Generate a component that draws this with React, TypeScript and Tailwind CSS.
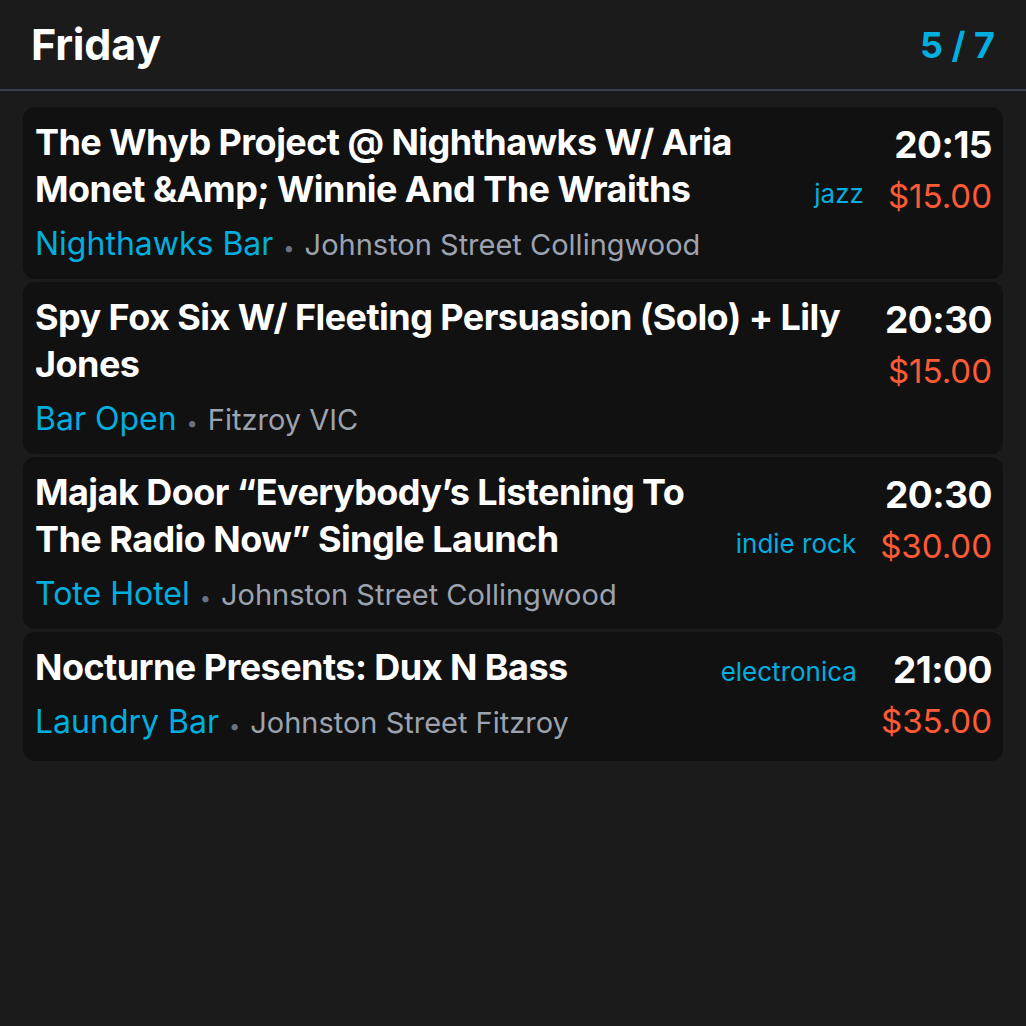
import React from 'react';

type Gig = {
  title: string;
  venue: string;
  address: string;
  genre?: string;
  time: string;
  price: string;
};

const gigs: Gig[] = [
  {
    title: 'The Whyb Project @ Nighthawks W/ Aria Monet &Amp; Winnie And The Wraiths',
    venue: 'Nighthawks Bar',
    address: 'Johnston Street Collingwood',
    genre: 'jazz',
    time: '20:15',
    price: '$15.00',
  },
  {
    title: 'Spy Fox Six W/ Fleeting Persuasion (Solo) + Lily Jones',
    venue: 'Bar Open',
    address: 'Fitzroy VIC',
    time: '20:30',
    price: '$15.00',
  },
  {
    title: 'Majak Door \u201cEverybody\u2019s Listening To The Radio Now\u201d Single Launch',
    venue: 'Tote Hotel',
    address: 'Johnston Street Collingwood',
    genre: 'indie rock',
    time: '20:30',
    price: '$30.00',
  },
  {
    title: 'Nocturne Presents: Dux N Bass',
    venue: 'Laundry Bar',
    address: 'Johnston Street Fitzroy',
    genre: 'electronica',
    time: '21:00',
    price: '$35.00',
  },
];

const GigCard: React.FC<{ gig: Gig }> = ({ gig }) => (
  <div className="flex gap-[24px] rounded-xl bg-[#111111] pl-3 pr-[11px] pt-[12px] pb-[15px]">
    <div className="flex-1 min-w-0">
      <div className="flex items-end gap-6">
        <h2 className="flex-1 text-[36px] leading-[47px] font-bold tracking-[-0.55px] text-white">{gig.title}</h2>
        {gig.genre && (
          <span className="text-[26px] leading-[38px] text-[#00aedf] whitespace-nowrap">{gig.genre}</span>
        )}
      </div>
      <div className="mt-[11px] flex h-[40px] items-baseline whitespace-nowrap leading-[40px]">
        <span className="text-[32px] text-[#00aedf]">{gig.venue}</span>
        <span className="mx-[10px] text-[20px] text-[#6b7280]">•</span>
        <span className="text-[29px] text-[#9ca3af]">{gig.address}</span>
      </div>
    </div>
    <div className="flex flex-col items-end">
      <span className="text-[37px] leading-[52px] font-bold tracking-[-0.5px] text-white">{gig.time}</span>
      <span className="text-[33px] leading-[50px] text-[#ff5a36]">{gig.price}</span>
    </div>
  </div>
);

const App: React.FC = () => {
  return (
    <div className="min-h-[1026px] bg-[#1b1b1b] font-['Inter','Noto_Sans',sans-serif]">
      <header className="flex items-center justify-between border-b-2 border-[#3a404c] px-[31px] h-[91px]">
        <h1 className="text-[43px] font-bold tracking-[-0.2px] text-white">Friday</h1>
        <span className="text-[36px] font-bold text-[#00aedf]">5 / 7</span>
      </header>
      <main className="flex flex-col gap-[3px] px-[23px] pt-[16px]">
        {gigs.map((gig) => (
          <GigCard key={gig.title} gig={gig} />
        ))}
      </main>
    </div>
  );
};

export default App;
